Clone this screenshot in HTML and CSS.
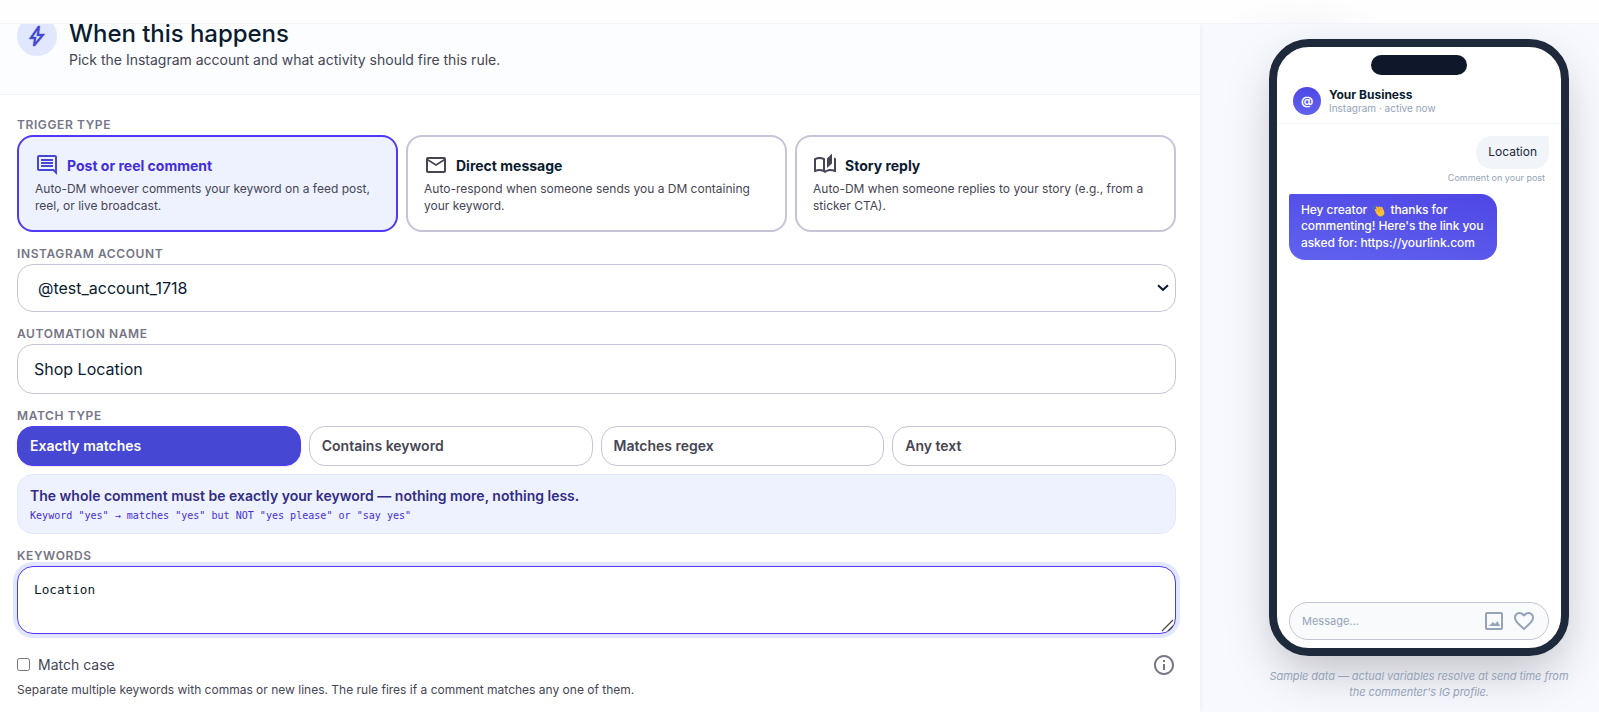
FILE: index.html
```html
<!DOCTYPE html>
<html lang="en">
<head>
    <meta charset="UTF-8">
    <meta name="viewport" content="width=device-width, initial-scale=1.0">
    <title>Edit automation</title>
    <link rel="stylesheet" href="styles.css">
</head>
<body>

    <div class="topbar"></div>

    <div class="layout">
        <main class="panel">
            <header class="panel-head">
                <span class="head-icon">
                    <svg width="24" height="24" viewBox="0 -960 960 960"><path d="m422-232 207-248H469l29-227-185 267h139l-30 208ZM320-80l40-280H160l360-520h80l-40 320h240L400-80h-80Z"/></svg>
                </span>
                <div>
                    <h2>When this happens</h2>
                    <p>Pick the Instagram account and what activity should fire this rule.</p>
                </div>
            </header>

            <form class="form">
                <div class="field">
                    <span class="label">Trigger type</span>
                    <div class="triggers">
                        <div class="trigger active">
                            <div class="trigger-title">
                                <svg width="24" height="24" viewBox="0 0 24 24"><path d="M21.99 4c0-1.1-.89-2-1.99-2H4c-1.1 0-2 .9-2 2v12c0 1.1.9 2 2 2h14l4 4-.01-18zM20 4v13.17L18.83 16H4V4h16zM6 12h12v2H6zm0-3h12v2H6zm0-3h12v2H6z"/></svg>
                                <strong>Post or reel comment</strong>
                            </div>
                            <p>Auto-DM whoever comments your keyword on a feed post, reel, or live broadcast.</p>
                        </div>
                        <div class="trigger">
                            <div class="trigger-title">
                                <svg width="24" height="24" viewBox="0 0 24 24"><path d="M22 6c0-1.1-.9-2-2-2H4c-1.1 0-2 .9-2 2v12c0 1.1.9 2 2 2h16c1.1 0 2-.9 2-2V6zm-2 0-8 5-8-5h16zm0 12H4V8l8 5 8-5v10z"/></svg>
                                <strong>Direct message</strong>
                            </div>
                            <p>Auto-respond when someone sends you a DM containing your keyword.</p>
                        </div>
                        <div class="trigger">
                            <div class="trigger-title">
                                <svg width="24" height="24" viewBox="0 0 24 24"><path d="M22.47 5.2c-.47-.24-.96-.44-1.47-.61v12.03c-1.14-.41-2.31-.62-3.5-.62-1.9 0-3.78.54-5.5 1.58V5.48C10.38 4.55 8.51 4 6.5 4c-1.79 0-3.48.44-4.97 1.2-.33.16-.53.51-.53.88v12.08c0 .58.47.99 1 .99.16 0 .32-.04.48-.12C3.69 18.4 5.05 18 6.5 18c2.07 0 3.98.82 5.5 2 1.52-1.18 3.43-2 5.5-2 1.45 0 2.81.4 4.02 1.04.16.08.32.12.48.12.52 0 1-.41 1-.99V6.08c0-.37-.2-.72-.53-.88zM10 16.62C8.86 16.21 7.69 16 6.5 16s-2.36.21-3.5.62V6.71C4.11 6.24 5.28 6 6.5 6c1.2 0 2.39.25 3.5.72v9.9zM19 .5l-5 5V15l5-4.5V.5z"/></svg>
                                <strong>Story reply</strong>
                            </div>
                            <p>Auto-DM when someone replies to your story (e.g., from a sticker CTA).</p>
                        </div>
                    </div>
                </div>

                <div class="field">
                    <label class="label" for="account">Instagram account</label>
                    <div class="control select" id="account">
                        <span>@test_account_1718</span>
                        <svg width="14" height="8" viewBox="0 0 14 8"><path d="M2 1.2l5 4.6 5-4.6"/></svg>
                    </div>
                </div>

                <div class="field">
                    <label class="label" for="name">Automation name</label>
                    <input class="control" id="name" type="text" value="Shop Location">
                </div>

                <div class="field">
                    <span class="label">Match type</span>
                    <div class="matches">
                        <button type="button" class="match active">Exactly matches</button>
                        <button type="button" class="match">Contains keyword</button>
                        <button type="button" class="match">Matches regex</button>
                        <button type="button" class="match">Any text</button>
                    </div>
                    <div class="hint">
                        <p class="hint-title">The whole comment must be exactly your keyword — nothing more, nothing less.</p>
                        <p class="hint-code">Keyword "yes" → matches "yes" but NOT "yes please" or "say yes"</p>
                    </div>
                </div>

                <div class="field">
                    <label class="label" for="keywords">Keywords</label>
                    <div class="keywords-wrap">
                        <textarea class="keywords" id="keywords" spellcheck="false">Location</textarea>
                        <svg class="grip" width="13" height="13" viewBox="0 0 13 13"><path d="M1 12L12 1M7 12l5-5"/></svg>
                    </div>
                    <div class="case-row">
                        <label class="case"><input type="checkbox"> <span>Match case</span></label>
                        <svg width="24" height="24" viewBox="0 0 24 24"><path d="M11 7h2v2h-2zm0 4h2v6h-2zm1-9C6.48 2 2 6.48 2 12s4.48 10 10 10 10-4.48 10-10S17.52 2 12 2zm0 18c-4.41 0-8-3.59-8-8s3.59-8 8-8 8 3.59 8 8-3.59 8-8 8z"/></svg>
                    </div>
                    <p class="help">Separate multiple keywords with commas or new lines. The rule fires if a comment matches any one of them.</p>
                </div>
            </form>
        </main>

        <aside class="preview">
            <div class="phone">
                <div class="notch"></div>
                <div class="chat-head">
                    <span class="avatar">@</span>
                    <div>
                        <div class="chat-name">Your Business</div>
                        <div class="chat-status">Instagram · active now</div>
                    </div>
                </div>
                <div class="chat">
                    <div class="bubble incoming">Location</div>
                    <div class="meta">Comment on your post</div>
                    <div class="bubble outgoing">Hey creator
                        <svg class="wave" width="13" height="13" viewBox="0 0 26 26">
                            <path class="wave-line" d="M2 11c0-4 2-7 5-9M5 11c0-3 1-5 3-6M18 25c4 0 6-2 7-5"/>
                            <path class="wave-hand" d="M6 13c-1-2 1-4 3-2l2 2-3-5c-1-3 2-4 3-2l2 3c-2-4 1-5 3-3l1 2c0-3 3-3 4-1l3 7c2 5 0 9-4 10-4 2-8 0-10-3z"/>
                            <path class="wave-crease" d="M13 9l3 5M17 8l3 5M11 13l3 3"/>
                        </svg>
                        thanks for<br>commenting! Here's the link you asked for: https://yourlink.com</div>
                </div>
                <div class="composer">
                    <span>Message...</span>
                    <svg width="24" height="24" viewBox="0 0 24 24"><path d="M19 5v14H5V5h14m0-2H5c-1.1 0-2 .9-2 2v14c0 1.1.9 2 2 2h14c1.1 0 2-.9 2-2V5c0-1.1-.9-2-2-2zm-3.5 9-2.5 3-2-2-4 4h11l-2.5-5z"/></svg>
                    <svg width="24" height="24" viewBox="0 0 24 24"><path d="M16.5 3c-1.74 0-3.41.81-4.5 2.09C10.91 3.81 9.24 3 7.5 3 4.42 3 2 5.42 2 8.5c0 3.78 3.4 6.86 8.55 11.54L12 21.35l1.45-1.32C18.6 15.36 22 12.28 22 8.5 22 5.42 19.58 3 16.5 3zm-4.4 15.55-.1.1-.1-.1C7.14 14.24 4 11.39 4 8.5 4 6.5 5.5 5 7.5 5c1.54 0 3.04.99 3.57 2.36h1.87C13.46 5.99 14.96 5 16.5 5c2 0 3.5 1.5 3.5 3.5 0 2.89-3.14 5.74-7.9 10.05z"/></svg>
                </div>
            </div>
            <p class="caption">Sample data — actual variables resolve at send time from the commenter's IG profile.</p>
        </aside>
    </div>

</body>
</html>
```
FILE: styles.css
```css
* {
    box-sizing: border-box;
}
body {
    margin: 0;
    height: 712px;
    overflow: hidden;
    background: #f8f9ff;
    color: #0b1c30;
    font-family: Inter, "Liberation Sans", sans-serif;
    font-size: 14px;
}
h2, p {
    margin: 0;
}
svg {
    display: block;
    flex: none;
    fill: currentColor;
}
.topbar {
    position: relative;
    z-index: 2;
    height: 24px;
    background: radial-gradient(ellipse 75px 26px at 1305px 24px, #f7f7f8, #fefefe);
    border-bottom: 1px solid #f1f5f9;
}
.layout {
    display: flex;
    height: 688px;
}

/* left panel */
.panel {
    position: relative;
    width: 1200px;
    background: white;
    box-shadow: 0 0 6px rgba(15, 23, 42, 0.06);
}
.panel-head {
    display: flex;
    gap: 12px;
    height: 71px;
    padding-left: 17px;
    background: #fcfdff;
    border-bottom: 1px solid #f1f5f9;
}
.head-icon {
    display: flex;
    align-items: center;
    justify-content: center;
    width: 40px;
    height: 40px;
    margin-top: -8px;
    border-radius: 50%;
    background: #e0e7ff;
    color: #4648d4;
}
.head-icon svg {
    stroke: currentColor;
    stroke-width: 16;
}
.panel-head h2 {
    margin-top: -6px;
    font-size: 24px;
    font-weight: 500;
    line-height: 32px;
    letter-spacing: -0.05px;
}
.panel-head p {
    color: #464554;
    line-height: 20px;
}
.form {
    display: flex;
    flex-direction: column;
    gap: 13px;
    padding: 21px 24px 0 17px;
}
.label {
    display: block;
    height: 19px;
    color: #767586;
    font-size: 12px;
    font-weight: 600;
    line-height: 18px;
    letter-spacing: 0.6px;
    text-transform: uppercase;
}
.triggers {
    display: grid;
    grid-template-columns: repeat(3, 1fr);
    gap: 8px;
}
.trigger {
    height: 97px;
    padding: 16px;
    border: 2px solid #c7c4d7;
    border-radius: 16px;
    color: #464554;
}
.trigger.active {
    background: #eef2ff;
    border-color: #4f39f6;
}
.trigger-title {
    display: flex;
    align-items: center;
    gap: 8px;
    height: 24px;
}
.trigger-title strong {
    color: #0b1c30;
    font-weight: 700;
}
.trigger.active svg {
    color: #4648d4;
}
.trigger.active strong {
    color: #432dd7;
}
.trigger p {
    margin-top: 4px;
    font-size: 12px;
    line-height: 16.5px;
}
.control {
    display: block;
    width: 100%;
    height: 50px;
    padding: 0 16px;
    background: white;
    border: 1px solid #c7c4d7;
    border-radius: 16px;
    color: #0b1c30;
    font-family: inherit;
    font-size: 16px;
}
.select {
    display: flex;
    align-items: center;
    justify-content: space-between;
    height: 48px;
    padding: 0 5px 0 20px;
}
.select svg {
    fill: none;
    stroke: #0b1c30;
    stroke-width: 2;
}
.matches {
    display: grid;
    grid-template-columns: repeat(4, 1fr);
    gap: 8px;
}
.match {
    height: 40px;
    padding: 0 12px 2px;
    background: white;
    border: 1px solid #c7c4d7;
    border-radius: 16px;
    color: #464554;
    font-family: inherit;
    font-size: 14px;
    font-weight: 600;
    text-align: left;
}
.match.active {
    background: #4648d4;
    border-color: #4f39f6;
    color: white;
    box-shadow: 0 1px 2px rgba(0, 0, 0, 0.1);
}
.hint {
    height: 60px;
    margin-top: 8px;
    padding: 11px 12px;
    background: #eef2ff;
    border: 1px solid #e0e7ff;
    border-radius: 16px;
}
.hint-title {
    color: #312c85;
    font-weight: 600;
    line-height: 20px;
}
.hint-code {
    margin-top: 1px;
    color: #432dd7;
    font-family: "DejaVu Sans Mono", monospace;
    font-size: 10.05px;
    line-height: 18px;
}
.keywords-wrap {
    position: relative;
}
.keywords {
    display: block;
    width: 100%;
    height: 68px;
    padding: 13px 16px 0;
    border: 1px solid #4f39f6;
    border-radius: 16px;
    outline: none;
    resize: none;
    box-shadow: 0 0 0 4px #e0e7ff;
    color: #0b1c30;
    font-family: "DejaVu Sans Mono", monospace;
    font-size: 12.7px;
    line-height: 20px;
}
.grip {
    position: absolute;
    right: 2px;
    bottom: 2px;
    fill: none;
    stroke: #444;
    stroke-width: 1.2;
}
.case-row {
    display: flex;
    align-items: center;
    justify-content: space-between;
    height: 24px;
    margin-top: 19px;
    color: #767586;
}
.case {
    display: flex;
    align-items: center;
    gap: 8px;
    padding-bottom: 2px;
    color: #464554;
}
.case input {
    width: 13px;
    height: 13px;
    margin: 0;
}
.help {
    margin-top: 4px;
    color: #464554;
    font-size: 12px;
    line-height: 18px;
}

/* phone preview */
.preview {
    flex: 1;
    padding: 15px 30px 0 69px;
}
.phone {
    display: flex;
    flex-direction: column;
    width: 300px;
    height: 617px;
    padding: 8px 0;
    background: white;
    border: 8px solid #1e293b;
    border-radius: 40px;
    box-shadow: 0 20px 50px -8px rgba(0, 0, 0, 0.25);
}
.notch {
    width: 96px;
    height: 20px;
    margin: 0 auto;
    border-radius: 10px;
    background: #0f172a;
}
.chat-head {
    display: flex;
    align-items: center;
    gap: 8px;
    height: 49px;
    padding: 3px 16px 0;
    border-bottom: 1px solid #f1f5f9;
}
.avatar {
    width: 28px;
    height: 28px;
    border-radius: 50%;
    background: linear-gradient(to top, #6063ee, #4f46e5);
    color: white;
    font-size: 12px;
    font-weight: 700;
    line-height: 28px;
    text-align: center;
}
.chat-name {
    padding-top: 1px;
    font-size: 12px;
    font-weight: 700;
    line-height: 15px;
}
.chat-status {
    color: #94a3b8;
    font-size: 10px;
    line-height: 13px;
}
.chat {
    display: flex;
    flex: 1;
    flex-direction: column;
    align-items: flex-start;
    padding: 12px 12px 0;
}
.bubble {
    padding: 8px 12px;
    border-radius: 16px;
    font-size: 12px;
    line-height: 16.5px;
}
.incoming {
    align-self: flex-end;
    border-top-right-radius: 2px;
    background: #f1f5f9;
    color: #1e293b;
}
.meta {
    align-self: flex-end;
    margin: 1px 4px 9px;
    color: #94a3b8;
    font-size: 9px;
    line-height: 15px;
}
.outgoing {
    width: 208px;
    border-top-left-radius: 2px;
    background: linear-gradient(10deg, #6063ee, #4f46e5);
    color: white;
    font-weight: 500;
    line-height: 16.7px;
    letter-spacing: -0.08px;
}
.wave {
    display: inline-block;
    margin: 0 2px;
    vertical-align: -3px;
}
.wave-line {
    fill: none;
    stroke: #2f7fc4;
    stroke-width: 2;
}
.wave-hand {
    fill: #fcc034;
}
.wave-crease {
    fill: none;
    stroke: #e58a1f;
    stroke-width: 1.5;
}
.composer {
    display: flex;
    align-items: center;
    gap: 6px;
    height: 38px;
    margin: 0 12px;
    padding: 0 12px;
    background: #f8fafc;
    border: 1px solid #c7c4d7;
    border-radius: 19px;
    color: #94a3b8;
    font-size: 11px;
}
.composer span {
    flex: 1;
}
.caption {
    margin: 12px -3px 0;
    color: #94a3b8;
    font-size: 11px;
    font-style: italic;
    line-height: 16px;
    letter-spacing: -0.06px;
    text-align: center;
}
```
